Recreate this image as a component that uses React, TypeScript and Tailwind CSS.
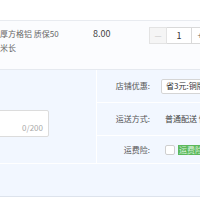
const font = "font-['Noto_Sans_CJK_SC','Noto_Sans',sans-serif]";

const Stepper = () => (
  <div className="flex h-[17px] shrink-0">
    <div className="w-[18px] shrink-0 bg-[#f5f5f5] border border-[#e3e3e3] flex items-center justify-center text-[#c4c4c4] text-[8px]">
      —
    </div>
    <div className="w-[24px] shrink-0 bg-white border-y border-[#d9d9d9] flex items-center justify-center text-[#333] text-[9px]">
      1
    </div>
    <div className="w-[18px] shrink-0 bg-white border border-[#d9d9d9] flex items-center justify-center text-[#666] text-[9px]">
      +
    </div>
  </div>
);

const Row = ({
  label,
  children,
  h,
  last,
}: {
  label: string;
  children: React.ReactNode;
  h: string;
  last?: boolean;
}) => (
  <div className={`flex items-center ${h} ${last ? "" : "border-b border-white"}`}>
    <div className="w-[54px] shrink-0 text-right text-[#555] pr-[1px]">{label}</div>
    <div className="flex-1 pl-[10px] flex items-center whitespace-nowrap overflow-hidden">
      {children}
    </div>
  </div>
);

export default function App() {
  return (
    <div className={`w-[200px] h-[200px] overflow-hidden bg-white text-[8px] ${font}`}>
      <div className="h-[21px] border-b border-[#e8ebf0]" />
      <div className="h-[49px] bg-[#fbfcfe] border-b border-[#e5e9ef] flex">
        <div className="w-[93px] shrink-0 pt-[6px] leading-[14px] text-[#666]">
          厚方格铝 质保50
          <br />
          米长
        </div>
        <div className="w-[56px] shrink-0 pt-[6px] leading-[14px] text-[#444] text-[9px]">8.00</div>
        <div className="pt-[6px] shrink-0">
          <Stepper />
        </div>
      </div>
      <div className="bg-[#f2f7ff] border-b border-[#dde3ec]">
        <div className="flex h-[94px] border-b border-white">
          <div className="w-[97px] shrink-0 border-r border-white pt-[40px]">
            <div className="-ml-[100px] w-[149px] h-[27px] bg-white border border-[#dcdcdc] rounded-[2px] flex items-end justify-end pr-[5px] pb-[2px] text-[#aaa]">
              0/200
            </div>
          </div>
          <div className="flex-1 min-w-0">
            <Row label="店铺优惠:" h="h-[33px]">
              <div className="h-[15px] w-[60px] shrink-0 bg-white border border-[#d5d5d5] rounded-[2px] pl-[4px] flex items-center text-[#333]">
                省3元:铜牌
              </div>
            </Row>
            <Row label="运送方式:" h="h-[33px]">
              <span className="pl-[4px] text-[#444]">普通配送 快递</span>
            </Row>
            <Row label="运费险:" h="h-[28px]" last>
              <div className="ml-[4px] w-[10px] h-[10px] shrink-0 bg-white border border-[#cfcfcf] rounded-[2px]" />
              <span className="ml-[3px] bg-[#5cb85c] text-[#d9f2d9] px-[1px] leading-[10px]">运费险</span>
            </Row>
          </div>
        </div>
        <div className="h-[32px]" />
      </div>
    </div>
  );
}
